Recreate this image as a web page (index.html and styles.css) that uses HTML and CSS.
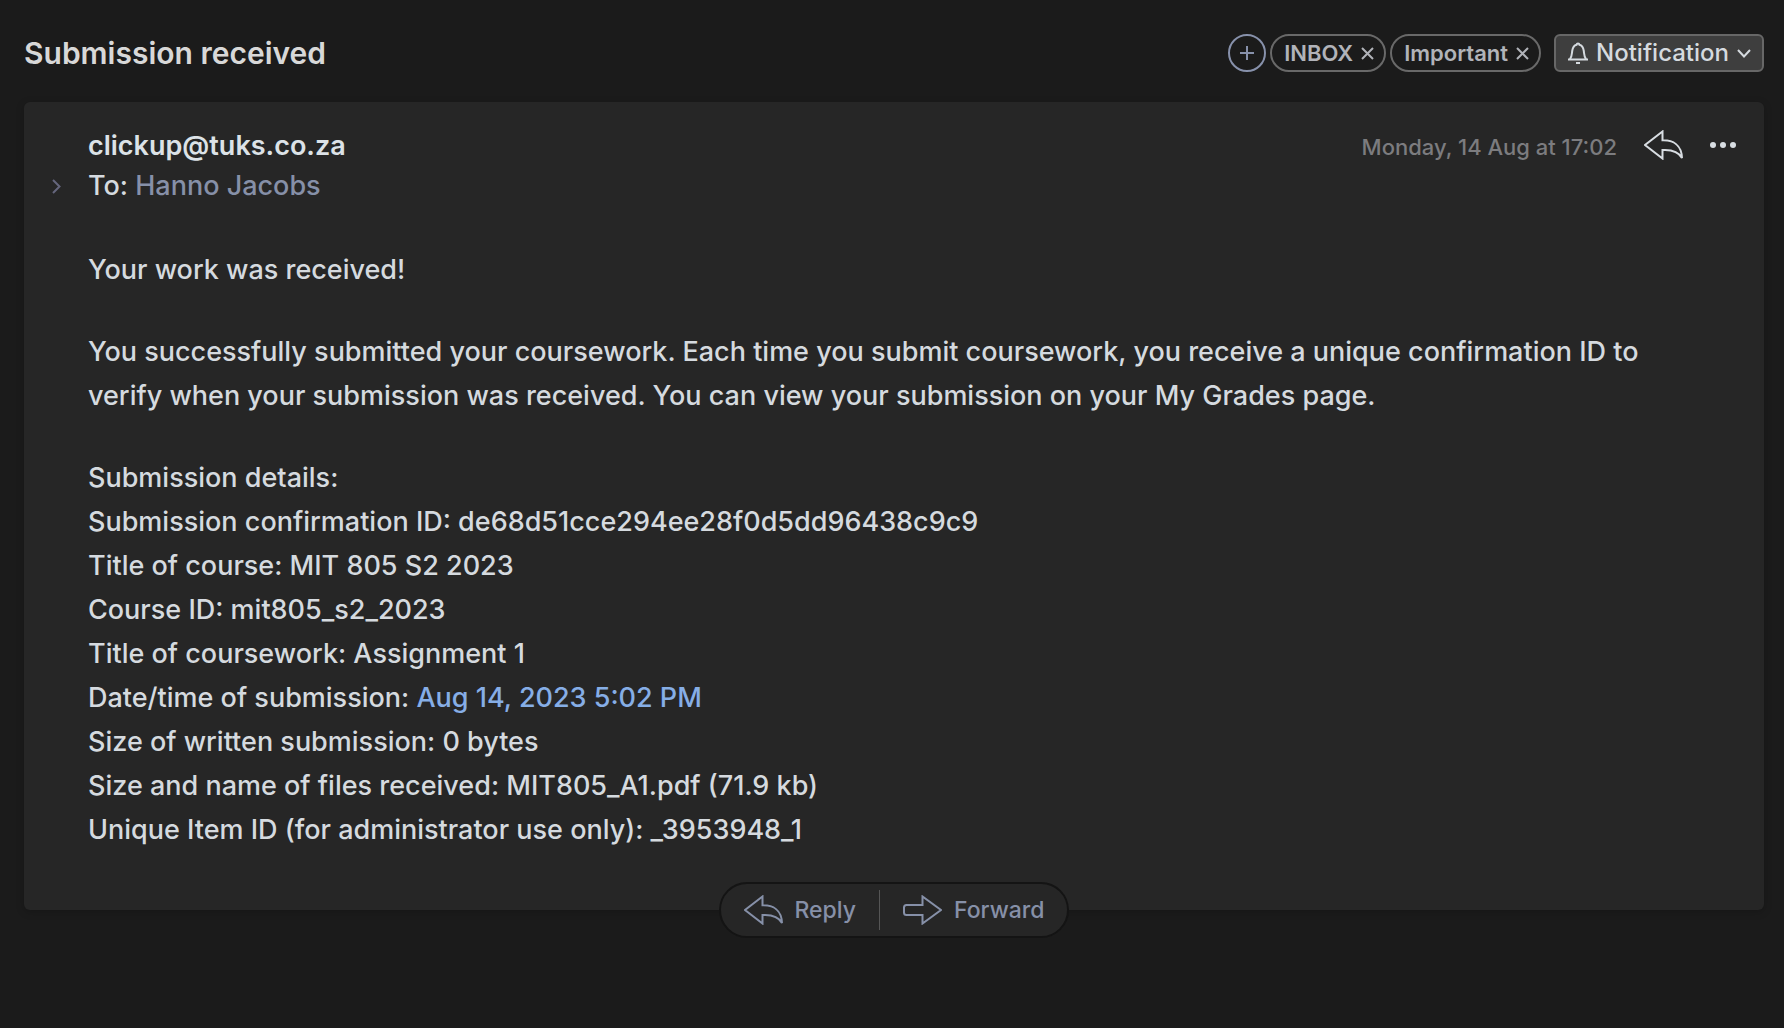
FILE: index.html
```html
<!DOCTYPE html>
<html lang="en">
<head>
<meta charset="utf-8">
<meta name="viewport" content="width=device-width, initial-scale=1">
<title>Submission received</title>
<link rel="stylesheet" href="styles.css">
</head>
<body>
<header class="topbar">
  <h1 class="subject">Submission received</h1>
  <div class="tags">
    <button class="tag-add" type="button" aria-label="Add label">
      <svg width="14" height="14" viewBox="0 0 14 14"><path d="M7 0v14M0 7h14"/></svg>
    </button>
    <span class="tag">INBOX
      <button class="tag-remove" type="button" aria-label="Remove INBOX"><svg width="13" height="13" viewBox="0 0 13 13"><path d="M1 1l11 11M12 1L1 12"/></svg></button>
    </span>
    <span class="tag">Important
      <button class="tag-remove" type="button" aria-label="Remove Important"><svg width="13" height="13" viewBox="0 0 13 13"><path d="M1 1l11 11M12 1L1 12"/></svg></button>
    </span>
  </div>
  <button class="category" type="button">
    <svg width="20" height="22" viewBox="0 0 20 22"><path d="M0 17.500h20M2 17C4 14.500 3.800 12 4.200 9C4.700 5.500 6.500 3.200 8.600 2.700C8.800 1 11.200 1 11.400 2.700C13.500 3.200 15.300 5.500 15.800 9C16.200 12 16 14.500 18 17"/><path d="M8 21h4"/></svg>
    <span>Notification</span>
    <svg width="14" height="9" viewBox="0 0 14 9"><path d="M1 1l6 6.500L13 1"/></svg>
  </button>
</header>

<main>
  <article class="card">
    <header class="meta">
      <button class="expand" type="button" aria-label="Show details">
        <svg width="9" height="15" viewBox="0 0 9 15"><path d="M1 1l6.500 6.500L1 14"/></svg>
      </button>
      <div class="people">
        <div class="sender">clickup@tuks.co.za</div>
        <div>To: <a class="recipient" href="#hanno">Hanno Jacobs</a></div>
      </div>
      <div class="actions">
        <time datetime="2023-08-14T17:02">Monday, 14 Aug at 17:02</time>
        <button class="icon-button" type="button" aria-label="Reply">
          <svg width="39" height="30" viewBox="0 0 39 30"><path d="M18.500 10.300C29 10 37.500 15 38 28C34.500 21.500 27 19.500 18.500 20V28.500L1 15L18.500 1.500z"/></svg>
        </button>
        <button class="icon-button" type="button" aria-label="More">
          <svg class="dots" width="26" height="6" viewBox="0 0 26 6"><circle cx="3" cy="3" r="3"/><circle cx="13" cy="3" r="3"/><circle cx="23" cy="3" r="3"/></svg>
        </button>
      </div>
    </header>
    <div class="message">
      <p>Your work was received!</p>
      <p>You successfully submitted your coursework. Each time you submit coursework, you receive a unique confirmation ID to verify when your submission was received. You can view your submission on your My Grades page.</p>
      <p>Submission details:<br>
      Submission confirmation ID: de68d51cce294ee28f0d5dd96438c9c9<br>
      Title of course: MIT 805 S2 2023<br>
      Course ID: mit805_s2_2023<br>
      Title of coursework: Assignment 1<br>
      Date/time of submission: <a class="date-link" href="#date">Aug 14, 2023 5:02 PM</a><br>
      Size of written submission: 0 bytes<br>
      Size and name of files received: MIT805_A1.pdf (71.9 kb)<br>
      Unique Item ID (for administrator use only): _3953948_1</p>
    </div>
  </article>
  <div class="respond">
    <button type="button">
      <svg width="39" height="30" viewBox="0 0 39 30"><path d="M18.500 10.300C29 10 37.500 15 38 28C34.500 21.500 27 19.500 18.500 20V28.500L1 15L18.500 1.500z"/></svg>
      Reply
    </button>
    <button type="button">
      <svg width="39" height="30" viewBox="0 0 39 30"><path d="M19.500 10H3.500Q1 10 1 12.500V17.500Q1 20 3.500 20H19.500V28.500L38 15L19.500 1.500z"/></svg>
      Forward
    </button>
  </div>
</main>
</body>
</html>
```
FILE: styles.css
```css
* {
  box-sizing: border-box;
}

body {
  margin: 0;
  padding: 34px 20px 40px 24px;
  min-height: 100vh;
  background: #1b1b1b;
  color: #d5dadf;
  font-family: Inter, "Liberation Sans", sans-serif;
  font-size: 27px;
  font-weight: 500;
  line-height: 40px;
}

button {
  margin: 0;
  padding: 0;
  border: 0;
  background: none;
  color: inherit;
  font: inherit;
  cursor: pointer;
}

a {
  text-decoration: none;
}

svg {
  display: block;
  flex: none;
  fill: none;
  stroke: currentColor;
  stroke-width: 2;
}

.topbar {
  display: flex;
  align-items: center;
  height: 38px;
  margin-bottom: 30px;
}

.subject {
  margin: 0;
  flex: 1;
  color: #d8d8d8;
  font-size: 30px;
  font-weight: 600;
}

.tags {
  display: flex;
  gap: 4px;
  margin-right: 13px;
}

.tag-add {
  display: grid;
  place-items: center;
  width: 38px;
  height: 38px;
  border: 2px solid #8791ab;
  border-radius: 50%;
  color: #8791ab;
}

.tag {
  display: flex;
  align-items: center;
  gap: 8px;
  height: 38px;
  padding: 0 10px 0 12px;
  border: 2px solid #696969;
  border-radius: 19px;
  color: #b1b3b9;
  font-size: 22px;
  font-weight: 600;
  line-height: 32px;
}

.category {
  display: flex;
  align-items: center;
  gap: 8px;
  height: 38px;
  padding: 0 11px 0 12px;
  border: 2px solid #676767;
  border-radius: 6px;
  background: #3e3e3e;
  font-size: 24px;
  line-height: 34px;
}

.card {
  padding: 24px 0 58px;
  border-radius: 6px;
  background: #262626;
  box-shadow: 0 2px 8px rgba(0, 0, 0, 0.2);
}

.meta {
  display: grid;
  grid-template-columns: 64px 1fr auto;
  padding-right: 28px;
  margin-bottom: 42px;
}

.expand {
  align-self: end;
  display: grid;
  place-items: center;
  height: 40px;
  color: #65667d;
}

.sender {
  color: #dce2e7;
  font-weight: 600;
}

.recipient {
  color: #8690a8;
}

.actions {
  display: flex;
  align-items: center;
  height: 38px;
  gap: 27px;
}

.actions time {
  padding-top: 4px;
  color: #7c7c7f;
  font-size: 22px;
}

.icon-button {
  color: #d8dde2;
}

.dots {
  fill: currentColor;
  stroke: none;
}

.message {
  padding: 0 64px;
  line-height: 44px;
}

.message p {
  margin: 0 0 38px;
}

.message p:last-child {
  margin: 0;
}

.date-link {
  color: #86aee6;
}

.respond {
  position: relative;
  display: flex;
  width: fit-content;
  height: 56px;
  margin: -28px auto 0;
  padding: 6px 0;
  border: 2px solid #141414;
  border-radius: 28px;
  background: #262626;
  color: #8690a8;
  font-size: 23px;
}

.respond button {
  display: flex;
  align-items: center;
  gap: 12px;
  padding: 0 23px;
}

.respond button + button {
  border-left: 1px solid #555555;
}
```
